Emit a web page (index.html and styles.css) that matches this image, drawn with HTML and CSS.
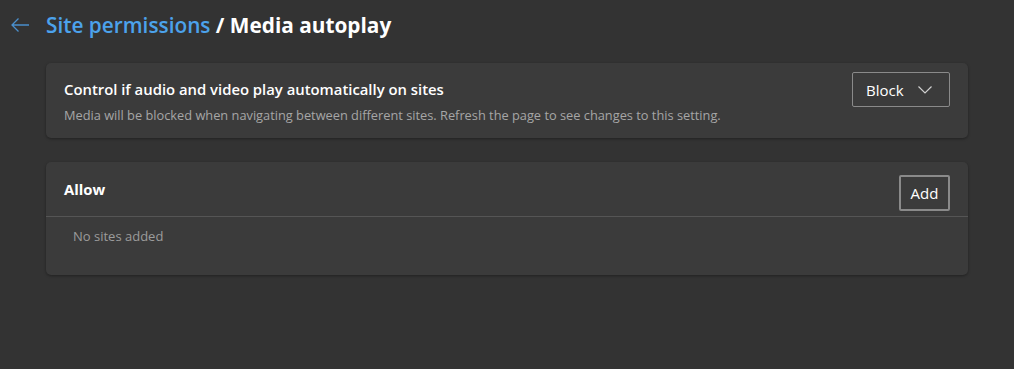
FILE: index.html
```html
<html lang="en">
  <head>
    <meta charset="UTF-8" />
    <title>Media autoplay</title>
    <link rel="stylesheet" href="styles.css">
  </head>
  <body>
    <div class="page">
      <header class="page-header">
        <button class="back" aria-label="Back">
          <svg width="20" height="16" viewBox="0 0 20 16">
            <path d="M19 8H2M8.5 1.5L2 8l6.5 6.5" fill="none" stroke="#4a8fcc" stroke-width="1.3" />
          </svg>
        </button>
        <h1><a href="#">Site permissions</a> / Media autoplay</h1>
      </header>

      <section class="card setting">
        <div class="setting-text">
          <h2>Control if audio and video play automatically on sites</h2>
          <p>Media will be blocked when navigating between different sites. Refresh the page to see changes to this setting.</p>
        </div>
        <button class="select">
          <span>Block</span>
          <svg width="16" height="10" viewBox="0 0 16 10">
            <path d="M1.5 1.5L8 8l6.5-6.5" fill="none" stroke="#d0d0d0" stroke-width="1.2" />
          </svg>
        </button>
      </section>

      <section class="card list">
        <div class="list-head">
          <h2>Allow</h2>
          <button class="add">Add</button>
        </div>
        <div class="list-body">No sites added</div>
      </section>
    </div>
  </body>
</html>
```

FILE: styles.css
```css
body {
  margin: 0;
  background: #333333;
  font-family: "Open Sans", "Noto Sans", sans-serif;
  color: #ffffff;
}

.page {
  width: 922px;
  padding: 8px 0 0 46px;
}

.page-header {
  display: flex;
  align-items: center;
  height: 34px;
  margin-bottom: 21px;
  position: relative;
}

.back {
  position: absolute;
  left: -36px;
  top: 9px;
  background: none;
  border: none;
  padding: 0;
}

.page-header h1 {
  margin: 0;
  font-size: 20.8px;
  font-weight: 700;
}

.page-header h1 a {
  color: #4ca2eb;
  font-weight: 600;
  text-decoration: none;
}

.card {
  background: #3b3b3b;
  border-radius: 5px;
  box-shadow: 0 1px 3px rgba(0, 0, 0, 0.35);
}

.setting {
  display: flex;
  justify-content: space-between;
  align-items: flex-start;
  padding: 8px 18px 14px 18px;
  margin-bottom: 24px;
}

.setting h2,
.list h2 {
  margin: 0;
  font-size: 14.85px;
  font-weight: 600;
}

.setting h2 {
  margin-top: 8px;
}

.setting p {
  margin: 7px 0 0 0;
  font-size: 12.8px;
  color: #a6a6a6;
}

.select {
  display: flex;
  align-items: center;
  justify-content: space-between;
  width: 98px;
  height: 35px;
  margin-top: 1px;
  padding: 0 16px 0 13px;
  background: #3b3b3b;
  border: 1px solid #8a8a8a;
  border-radius: 2px;
  color: #ffffff;
  font-family: inherit;
  font-size: 15px;
}

.list-head {
  display: flex;
  justify-content: space-between;
  align-items: center;
  height: 54px;
  padding: 0 18px;
  border-bottom: 1px solid #555555;
}

.list h2 {
  font-weight: 700;
}

.add {
  width: 51px;
  height: 36px;
  margin-top: 8px;
  background: #3b3b3b;
  border: 2px solid #8a8a8a;
  border-radius: 2px;
  color: #ffffff;
  font-family: inherit;
  font-size: 15px;
  padding: 0;
}

.list-body {
  padding: 10px 27px 28px 27px;
  font-size: 13px;
  color: #9c9c9c;
  height: 20px;
}
```
